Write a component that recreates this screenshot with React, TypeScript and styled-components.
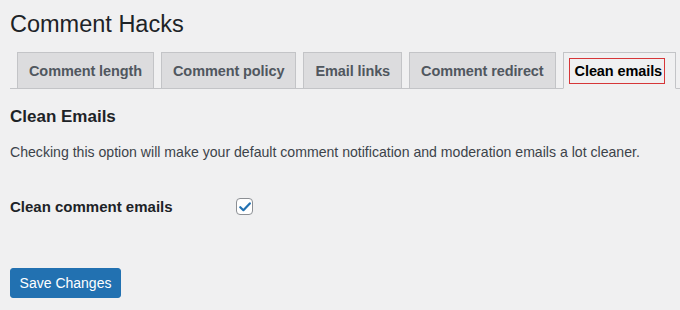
import React, { FC } from 'react'
import styled, { createGlobalStyle } from 'styled-components'

const GlobalStyle = createGlobalStyle`
  html, body {
    margin: 0;
    padding: 0;
    background: #f0f0f1;
  }
  body {
    font-family: "Liberation Sans", Arial, sans-serif;
    color: #1d2327;
  }
`

interface Tab {
  label: string
  active?: boolean
}

const tabs: Tab[] = [
  { label: 'Comment length' },
  { label: 'Comment policy' },
  { label: 'Email links' },
  { label: 'Comment redirect' },
  { label: 'Clean emails', active: true },
]

const App: FC = () => {
  return (
    <Wrap>
      <GlobalStyle />
      <Title>Comment Hacks</Title>
      <TabBar>
        {tabs.map((tab) => (
          <TabItem key={tab.label} $active={tab.active}>
            <TabLabel $active={tab.active}>{tab.label}</TabLabel>
          </TabItem>
        ))}
      </TabBar>
      <Heading>Clean Emails</Heading>
      <Description>
        Checking this option will make your default comment notification and
        moderation emails a lot cleaner.
      </Description>
      <FieldRow>
        <FieldLabel>Clean comment emails</FieldLabel>
        <Checkbox>
          <svg width="12" height="10" viewBox="0 0 12 10" fill="none">
            <path
              d="M1.3 5.2 L4.4 8.2 L10.8 1.4"
              stroke="#2271b1"
              strokeWidth="2.2"
              strokeLinecap="round"
              strokeLinejoin="round"
            />
          </svg>
        </Checkbox>
      </FieldRow>
      <SaveButton>Save Changes</SaveButton>
    </Wrap>
  )
}

const Wrap = styled.div`
  padding: 10px 0 0 10px;
`
const Title = styled.h1`
  margin: 0;
  font-size: 23.5px;
  font-weight: 400;
  line-height: 29px;
  color: #1d2327;
`
const TabBar = styled.div`
  display: flex;
  gap: 7px;
  margin-top: 13px;
  padding-left: 7px;
  border-bottom: 1px solid #c3c4c7;
`
const TabItem = styled.div<{ $active?: boolean }>`
  flex: 0 0 auto;
  display: flex;
  align-items: center;
  height: 35px;
  padding: ${(p) => (p.$active ? '0 10px 0 5px' : '0 11px')};
  background: ${(p) => (p.$active ? '#f0f0f1' : '#dcdcde')};
  border: 1px solid #c3c4c7;
  border-bottom: ${(p) => (p.$active ? '1px solid #f0f0f1' : 'none')};
  margin-bottom: ${(p) => (p.$active ? '-1px' : '0')};
`
const TabLabel = styled.span<{ $active?: boolean }>`
  white-space: nowrap;
  font-size: 14.5px;
  font-weight: 700;
  letter-spacing: -0.1px;
  color: ${(p) => (p.$active ? '#000' : '#50575e')};
  ${(p) =>
    p.$active &&
    `
    border: 1px solid #d63638;
    padding: 4px 2px 4px 5px;
  `}
`
const Heading = styled.h2`
  margin: 17px 0 0;
  font-size: 17px;
  font-weight: 700;
  line-height: 22px;
  color: #1d2327;
`
const Description = styled.p`
  margin: 14px 0 0;
  font-size: 14.1px;
  line-height: 20px;
  color: #3c434a;
`
const FieldRow = styled.div`
  display: flex;
  align-items: center;
  margin-top: 36px;
`
const FieldLabel = styled.div`
  width: 226px;
  font-size: 15px;
  font-weight: 700;
  color: #1d2327;
`
const Checkbox = styled.div`
  width: 15px;
  height: 15px;
  border: 1px solid #8c8f94;
  border-radius: 4px;
  background: #fff;
  display: flex;
  align-items: center;
  justify-content: center;
`
const SaveButton = styled.button`
  margin-top: 53px;
  width: 111px;
  height: 30px;
  padding: 0;
  background: #2271b1;
  border: 1px solid #2271b1;
  border-radius: 3px;
  color: #fff;
  font-family: "Liberation Sans", Arial, sans-serif;
  font-size: 14px;
`

export default App
